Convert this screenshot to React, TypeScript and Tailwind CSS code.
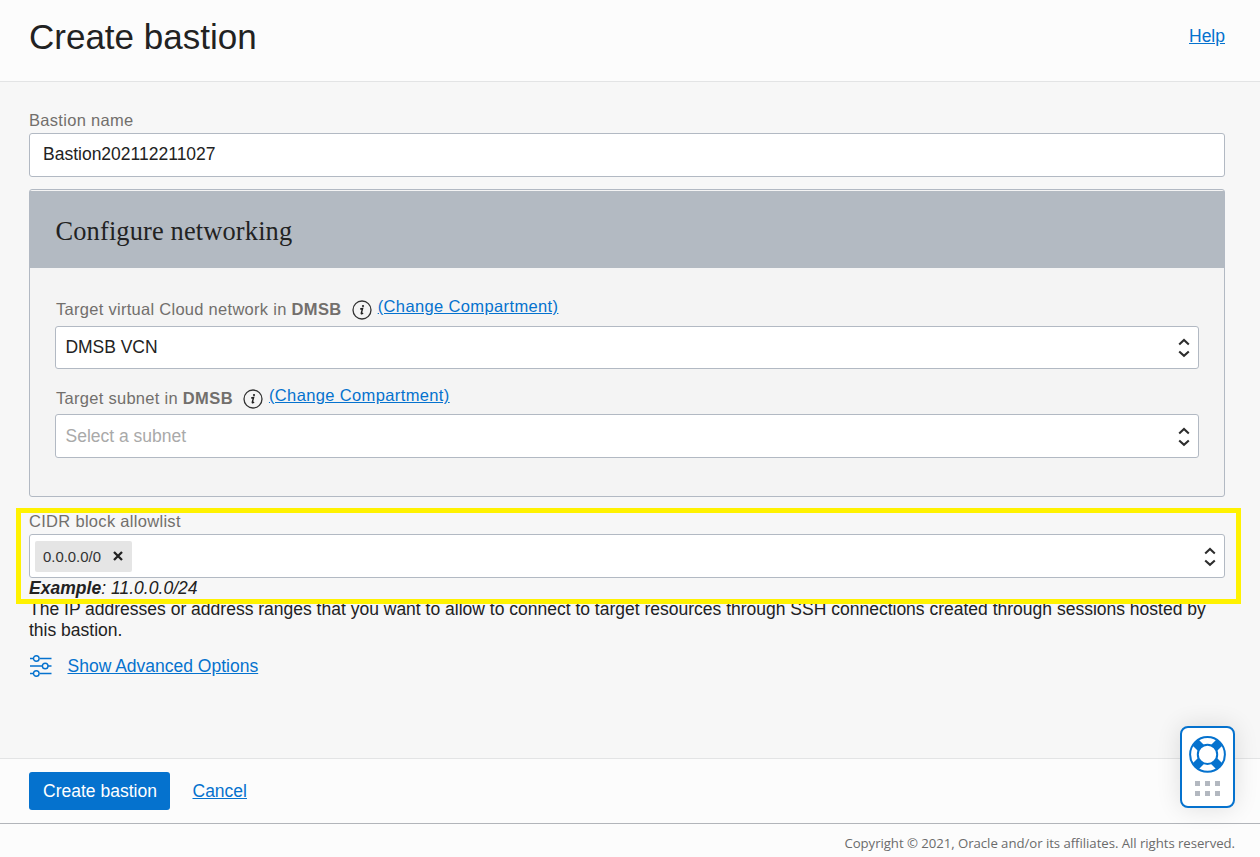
import type { ReactNode } from "react";

function Chevrons() {
  return (
    <svg width="12" height="20" viewBox="0 0 12 20" fill="none" stroke="#2d2d2d" strokeWidth="2.1">
      <path d="M1.2 6.4 6 2 10.800 6.400M1.200 13.400 6 17.800l4.800-4.400" />
    </svg>
  );
}

function InfoIcon() {
  return (
    <svg width="20" height="20" viewBox="0 0 20 20" className="shrink-0">
      <circle cx="10" cy="10" r="9" fill="none" stroke="#333" strokeWidth="1.3" />
      <circle cx="11" cy="6" r="1.1" fill="#222" />
      <path d="M8.200 9 10.600 8.400 9.300 13.200Q9.100 14.600 11.100 13" fill="none" stroke="#222" strokeWidth="1.400" />
    </svg>
  );
}

function SelectLabel({ children }: { children: ReactNode }) {
  return (
    <div className="flex h-[22px] items-start pl-px whitespace-pre text-[16.5px] leading-[20px]">
      <span className="pt-[2px] tracking-[0.28px] text-[#726f6c]">
        {children} <b className="tracking-[0.4px]">DMSB</b>
      </span>
      <span className="ml-[10px] pt-[2.5px]">
        <InfoIcon />
      </span>
      <a className="ml-[6px] -mt-px tracking-[0.37px] text-[#0572ce] underline underline-offset-1">(Change Compartment)</a>
    </div>
  );
}

function Lifebuoy() {
  return (
    <svg width="37" height="38" viewBox="0.500 0 37 38" fill="none">
      <path d="M7 7.400 31 31.400M31 7.400 7 31.400" stroke="#0572ce" strokeWidth="8.500" />
      <circle cx="19" cy="19.400" r="17.400" stroke="#0572ce" strokeWidth="2" />
      <circle cx="19" cy="19.400" r="9.700" fill="white" stroke="#0572ce" strokeWidth="2" />
    </svg>
  );
}

export default function App() {
  return (
    <div className="relative flex h-[857px] w-[1260px] flex-col overflow-hidden bg-[#f7f7f7] font-['Liberation_Sans',Arial,sans-serif] text-[17.5px] text-[#222]">
      <header className="flex h-[82px] shrink-0 items-start justify-between border-b border-[#e3e4e5] bg-[#fcfcfc] pr-[35px] pl-[29px]">
        <h1 className="pt-[17px] text-[35px] leading-[40px]">Create bastion</h1>
        <a className="pt-[26px] leading-[20px] text-[#0572ce] underline underline-offset-1">Help</a>
      </header>

      <main className="flex h-[676px] shrink-0 flex-col pt-[28px] pr-[35px] pl-[29px]">
        <label className="h-[23px] text-[16.5px] leading-[20px] tracking-[0.3px] text-[#726f6c]">Bastion name</label>
        <div className="flex h-[44px] items-center rounded-[3px] border border-[#b2b9c3] bg-white px-[13px] pb-[2px]">Bastion202112211027</div>

        <section className="mt-[12px] h-[308px] rounded-[3px] border border-[#b2b9c3] bg-[#f4f4f4] pt-px">
          <h2 className="flex h-[77px] items-center bg-[#b3bac2] pt-[4px] pl-[25.5px] font-['Liberation_Serif','Times_New_Roman',serif] text-[26.4px] tracking-[0.15px]">
            Configure networking
          </h2>
          <div className="flex flex-col px-[25px] pt-[29px]">
            <SelectLabel>Target virtual Cloud network in</SelectLabel>
            <div className="mt-[7px] flex h-[43px] items-center justify-between rounded-[3px] border border-[#b2b9c3] bg-white pr-[8px] pl-[9.5px]">
              <span className="tracking-[-0.05px]">DMSB VCN</span>
              <Chevrons />
            </div>
            <div className="h-[17px]" />
            <SelectLabel>Target subnet in</SelectLabel>
            <div className="mt-[6px] flex h-[44px] items-center justify-between rounded-[3px] border border-[#b2b9c3] bg-white pt-px pr-[8px] pl-[9.5px]">
              <span className="pb-px text-[#a9a9a9]">Select a subnet</span>
              <Chevrons />
            </div>
          </div>
        </section>

        <label className="mt-[14px] h-[23px] text-[16.5px] leading-[20px] tracking-[0.3px] text-[#726f6c]">CIDR block allowlist</label>
        <div className="flex h-[44px] shrink-0 items-center justify-between rounded-[3px] border border-[#b2b9c3] bg-white pr-[8px] pl-[5px]">
          <div className="flex h-[31px] w-[97px] items-center justify-between rounded-[2px] bg-[#e5e5e5] pr-[9px] pl-[8px] text-[14.9px] text-[#333]">
            <span className="pt-[2px]">0.0.0.0/0</span>
            <svg width="10" height="10" viewBox="0 0 10 10" stroke="#222" strokeWidth="2.3">
              <path d="m1 1 8 8M9 1 1 9" />
            </svg>
          </div>
          <div className="pt-[2px]">
            <Chevrons />
          </div>
        </div>
        <p className="leading-[20px] tracking-[0.03px] italic">
          <b>Example</b>: 11.0.0.0/24
        </p>
        <p className="pt-px leading-[21px] whitespace-nowrap">
          The IP addresses or address ranges that you want to allow to connect to target resources through SSH connections created through sessions hosted by
          <br />
          this bastion.
        </p>
        <div className="mt-[13px] flex items-center">
          <svg width="24" height="24" viewBox="0 0 24 24" fill="none" stroke="#0572ce" strokeWidth="1.400">
            <path d="M1 4.500h3.200M10.800 4.500H22.500M1 12h12M19 12h3.500M1 19.500h3.200M10.800 19.500H22.500" />
            <circle cx="7.300" cy="4.500" r="2.800" />
            <circle cx="16.200" cy="12" r="2.800" />
            <circle cx="7.300" cy="19.500" r="2.800" />
          </svg>
          <a className="ml-[14.500px] leading-[24px] text-[#0572ce] underline underline-offset-1">Show Advanced Options</a>
        </div>
      </main>

      <footer className="flex h-[66px] shrink-0 items-center border-t border-b border-t-[#e3e4e5] border-b-[#b2b5ba] bg-[#fcfcfc] pl-[29px]">
        <button className="h-[38px] w-[141px] rounded-[3px] bg-[#0572ce] pl-px text-white">Create bastion</button>
        <a className="ml-[22.5px] text-[#0572ce] underline underline-offset-1">Cancel</a>
      </footer>
      <div className="h-[33px] bg-[#fcfcfc] pt-[9px] pr-[25px] text-right font-['Open_Sans','Noto_Sans',sans-serif] text-[13.2px] leading-[20px] tracking-[-0.045px] text-[#6b6b6b]">
        Copyright © 2021, Oracle and/or its affiliates. All rights reserved.
      </div>

      <div className="pointer-events-none absolute top-[508px] left-[16px] h-[96px] w-[1225px] border-[5px] border-[#fff200]" />

      <div className="absolute top-[726px] left-[1180px] flex h-[82px] w-[55px] flex-col items-center rounded-[8px] border-2 border-[#0572ce] bg-white pt-[7px] shadow-[0_0_24px_rgba(0,0,0,0.12)]">
        <Lifebuoy />
        <div className="mt-[8px] grid grid-cols-3 gap-[5px]">
          {[0, 1, 2, 3, 4, 5].map((dot) => (
            <span key={dot} className="size-[5px] bg-[#b3b8c0]" />
          ))}
        </div>
      </div>
    </div>
  );
}
